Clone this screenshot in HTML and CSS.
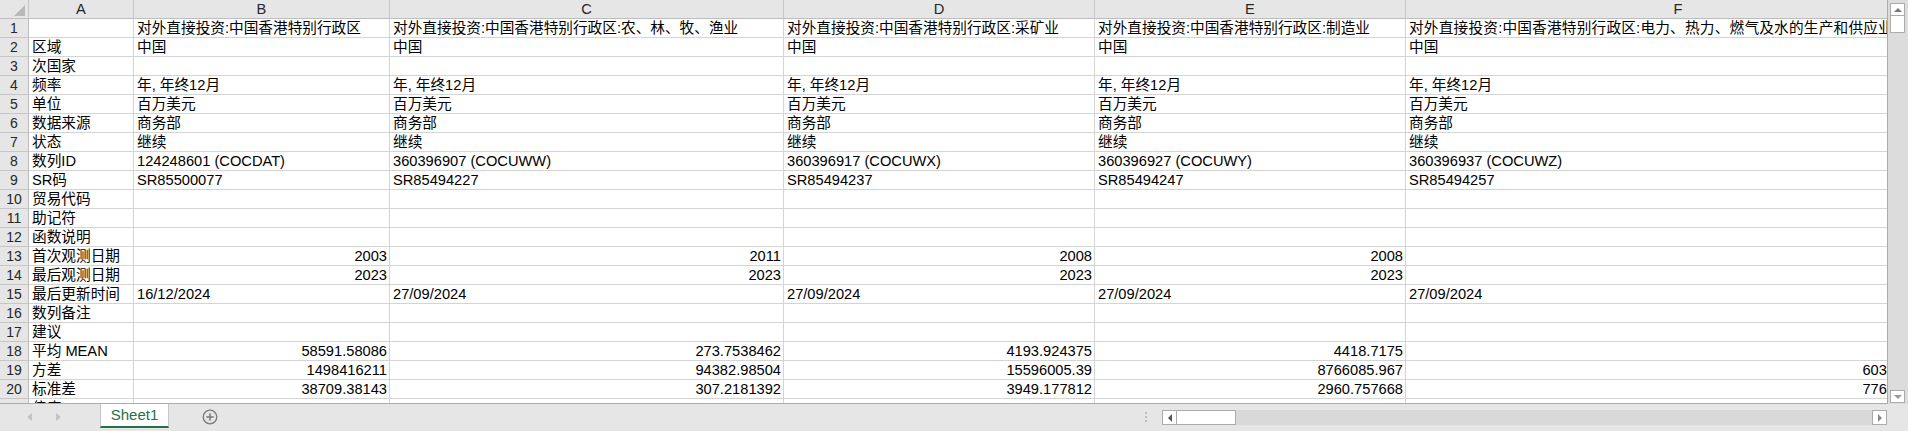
FILE: index.html
```html
<!DOCTYPE html>
<html lang="zh-CN">
<head>
  <meta charset="UTF-8">
  <title>Sheet1</title>
  <link rel="stylesheet" href="styles.css">
</head>
<body>
  <div class="app">
    <div class="main">
      <!-- Grid -->
      <div class="sheet">
        <div class="row head">
          <div class="corner"><span class="tri"></span></div>
          <div class="h">A</div><div class="h">B</div><div class="h">C</div><div class="h">D</div><div class="h">E</div><div class="h">F</div>
        </div>
        <div class="row">
          <div class="rh">1</div><div class="c"></div>
          <div class="c">对外直接投资:中国香港特别行政区</div>
          <div class="c">对外直接投资:中国香港特别行政区:农、林、牧、渔业</div>
          <div class="c">对外直接投资:中国香港特别行政区:采矿业</div>
          <div class="c">对外直接投资:中国香港特别行政区:制造业</div>
          <div class="c wide">对外直接投资:中国香港特别行政区:电力、热力、燃气及水的生产和供应业</div>
        </div>
        <div class="row">
          <div class="rh">2</div><div class="c">区域</div>
          <div class="c">中国</div><div class="c">中国</div><div class="c">中国</div><div class="c">中国</div><div class="c">中国</div>
        </div>
        <div class="row">
          <div class="rh">3</div><div class="c">次国家</div>
          <div class="c"></div><div class="c"></div><div class="c"></div><div class="c"></div><div class="c"></div>
        </div>
        <div class="row">
          <div class="rh">4</div><div class="c">频率</div>
          <div class="c">年, 年终12月</div><div class="c">年, 年终12月</div><div class="c">年, 年终12月</div><div class="c">年, 年终12月</div><div class="c">年, 年终12月</div>
        </div>
        <div class="row">
          <div class="rh">5</div><div class="c">单位</div>
          <div class="c">百万美元</div><div class="c">百万美元</div><div class="c">百万美元</div><div class="c">百万美元</div><div class="c">百万美元</div>
        </div>
        <div class="row">
          <div class="rh">6</div><div class="c">数据来源</div>
          <div class="c">商务部</div><div class="c">商务部</div><div class="c">商务部</div><div class="c">商务部</div><div class="c">商务部</div>
        </div>
        <div class="row">
          <div class="rh">7</div><div class="c">状态</div>
          <div class="c">继续</div><div class="c">继续</div><div class="c">继续</div><div class="c">继续</div><div class="c">继续</div>
        </div>
        <div class="row">
          <div class="rh">8</div><div class="c">数列ID</div>
          <div class="c">124248601 (COCDAT)</div><div class="c">360396907 (COCUWW)</div><div class="c">360396917 (COCUWX)</div><div class="c">360396927 (COCUWY)</div><div class="c">360396937 (COCUWZ)</div>
        </div>
        <div class="row">
          <div class="rh">9</div><div class="c">SR码</div>
          <div class="c">SR85500077</div><div class="c">SR85494227</div><div class="c">SR85494237</div><div class="c">SR85494247</div><div class="c">SR85494257</div>
        </div>
        <div class="row">
          <div class="rh">10</div><div class="c">贸易代码</div>
          <div class="c"></div><div class="c"></div><div class="c"></div><div class="c"></div><div class="c"></div>
        </div>
        <div class="row">
          <div class="rh">11</div><div class="c">助记符</div>
          <div class="c"></div><div class="c"></div><div class="c"></div><div class="c"></div><div class="c"></div>
        </div>
        <div class="row">
          <div class="rh">12</div><div class="c">函数说明</div>
          <div class="c"></div><div class="c"></div><div class="c"></div><div class="c"></div><div class="c"></div>
        </div>
        <div class="row">
          <div class="rh">13</div><div class="c">首次观测日期</div>
          <div class="c num">2003</div><div class="c num">2011</div><div class="c num">2008</div><div class="c num">2008</div><div class="c num">2004</div>
        </div>
        <div class="row">
          <div class="rh">14</div><div class="c">最后观测日期</div>
          <div class="c num">2023</div><div class="c num">2023</div><div class="c num">2023</div><div class="c num">2023</div><div class="c num">2023</div>
        </div>
        <div class="row">
          <div class="rh">15</div><div class="c">最后更新时间</div>
          <div class="c">16/12/2024</div><div class="c">27/09/2024</div><div class="c">27/09/2024</div><div class="c">27/09/2024</div><div class="c">27/09/2024</div>
        </div>
        <div class="row">
          <div class="rh">16</div><div class="c">数列备注</div>
          <div class="c"></div><div class="c"></div><div class="c"></div><div class="c"></div><div class="c"></div>
        </div>
        <div class="row">
          <div class="rh">17</div><div class="c">建议</div>
          <div class="c"></div><div class="c"></div><div class="c"></div><div class="c"></div><div class="c"></div>
        </div>
        <div class="row">
          <div class="rh">18</div><div class="c">平均 MEAN</div>
          <div class="c num">58591.58086</div><div class="c num">273.7538462</div><div class="c num">4193.924375</div><div class="c num">4418.7175</div><div class="c num">1442.65</div>
        </div>
        <div class="row">
          <div class="rh">19</div><div class="c">方差</div>
          <div class="c num">1498416211</div><div class="c num">94382.98504</div><div class="c num">15596005.39</div><div class="c num">8766085.967</div><div class="c num">60302742.51</div>
        </div>
        <div class="row">
          <div class="rh">20</div><div class="c">标准差</div>
          <div class="c num">38709.38143</div><div class="c num">307.2181392</div><div class="c num">3949.177812</div><div class="c num">2960.757668</div><div class="c num">7765.420351</div>
        </div>
        <div class="row">
          <div class="rh">21</div><div class="c">偏度</div>
          <div class="c"></div><div class="c"></div><div class="c"></div><div class="c"></div><div class="c"></div>
        </div>
      </div>

      <!-- Vertical scrollbar -->
      <div class="vscroll">
        <div class="sbtn"><span class="arr up"></span></div>
        <div class="vthumb"></div>
        <div class="fill"></div>
        <div class="sbtn"><span class="arr down"></span></div>
      </div>
    </div>

    <!-- Sheet tabs + horizontal scrollbar -->
    <div class="tabbar">
      <div class="nav">
        <span class="nav-arr left"></span>
        <span class="nav-arr right"></span>
      </div>
      <div class="tab">Sheet1</div>
      <svg class="add" width="16" height="16" viewBox="0 0 16 16">
        <circle cx="8" cy="8" r="6.8" fill="none" stroke="#7a7a7a" stroke-width="1.3"/>
        <path d="M8 4.3v7.4M4.3 8h7.4" stroke="#7a7a7a" stroke-width="1.5"/>
      </svg>
      <div class="fill"></div>
      <div class="split"><i></i><i></i><i></i></div>
      <div class="hscroll">
        <div class="sbtn"><span class="arr left"></span></div>
        <div class="hthumb"></div>
        <div class="fill"></div>
        <div class="sbtn"><span class="arr right"></span></div>
      </div>
    </div>
  </div>
</body>
</html>
```

FILE: styles.css
```css
/* Basic */
body {
    margin: 0;
    width: 1908px;
    height: 431px;
    overflow: hidden;
    background: #e6e6e6;
    font-family: "Liberation Sans", "Noto Sans CJK SC", sans-serif;
    font-size: 14.67px;
    color: #000;
}
.app {
    display: flex;
    flex-direction: column;
    height: 431px;
}
.main {
    display: flex;
    height: 404px;
}
.fill {
    flex: 1;
}

/* Grid */
.sheet {
    width: 1887px;
    height: 403px;
    overflow: hidden;
    background: #fff;
    border-right: 1px solid #ababab;
    border-bottom: 1px solid #ababab;
}
.row {
    display: grid;
    grid-template-columns: 29px 105px 256px 394px 311px 311px 545px;
    height: 19px;
}
.row > div {
    box-sizing: border-box;
    height: 19px;
    line-height: 18px;
    border-right: 1px solid #d4d4d4;
    border-bottom: 1px solid #d4d4d4;
    white-space: nowrap;
    overflow: hidden;
}
.c {
    padding: 0 2px 0 3px;
}
.c.num {
    text-align: right;
}
.c.wide {
    letter-spacing: 0.2px;
}
.head > div {
    background: #e6e6e6;
    border-right-color: #c6c6c6;
    border-bottom-color: #bdbdbd;
    text-align: center;
    color: #262626;
}
.row > .rh {
    background: #e6e6e6;
    border-right-color: #bdbdbd;
    border-bottom-color: #c6c6c6;
    text-align: center;
    color: #262626;
    font-size: 14px;
}
.corner {
    display: flex;
    justify-content: flex-end;
    align-items: flex-end;
    padding: 0 3px 2px 0;
}
.tri {
    width: 0;
    height: 0;
    border-left: 11px solid transparent;
    border-bottom: 11px solid #b9b9b9;
}

/* Scrollbars */
.vscroll {
    flex: 1;
    display: flex;
    flex-direction: column;
    padding: 3px 0 1px 2px;
    background: #dcdcdc;
}
.vscroll .sbtn {
    width: 15px;
    height: 13px;
}
.sbtn {
    box-sizing: border-box;
    display: flex;
    justify-content: center;
    align-items: center;
    background: #fff;
    border: 1px solid #ababab;
}
.vthumb {
    box-sizing: border-box;
    width: 15px;
    height: 17px;
    background: #fff;
    border: 1px solid #ababab;
    border-top: 0;
}
.arr {
    width: 0;
    height: 0;
}
.arr.up {
    border-left: 4px solid transparent;
    border-right: 4px solid transparent;
    border-bottom: 4px solid #777;
}
.arr.down {
    border-left: 4px solid transparent;
    border-right: 4px solid transparent;
    border-top: 4px solid #9a9a9a;
}
.arr.left {
    border-top: 4px solid transparent;
    border-bottom: 4px solid transparent;
    border-right: 4px solid #555;
}
.arr.right {
    border-top: 4px solid transparent;
    border-bottom: 4px solid transparent;
    border-left: 4px solid #8a8a8a;
}

/* Tab bar */
.tabbar {
    display: flex;
    align-items: flex-start;
    height: 27px;
}
.nav {
    box-sizing: border-box;
    width: 100px;
    display: flex;
    gap: 24px;
    padding: 9px 0 0 27px;
}
.nav-arr {
    width: 0;
    height: 0;
    border-top: 4px solid transparent;
    border-bottom: 4px solid transparent;
}
.nav-arr.left {
    border-right: 5px solid #c3c3c3;
}
.nav-arr.right {
    border-left: 5px solid #c3c3c3;
}
.tab {
    width: 67px;
    height: 22px;
    line-height: 22px;
    background: #fff;
    border-left: 1px solid #c6c6c6;
    border-right: 1px solid #c6c6c6;
    border-bottom: 2px solid #217346;
    color: #217346;
    text-align: center;
    font-size: 15px;
}
.add {
    margin: 5px 0 0 33px;
}
.split {
    display: flex;
    flex-direction: column;
    gap: 2px;
    margin: 8px 15px 0 0;
}
.split i {
    width: 2px;
    height: 2px;
    background: #bdbdbd;
}
.hscroll {
    display: flex;
    width: 725px;
    height: 15px;
    margin: 6px 21px 0 0;
    background: #d9d9d9;
}
.hscroll .sbtn {
    width: 15px;
    height: 15px;
}
.hthumb {
    box-sizing: border-box;
    width: 59px;
    height: 15px;
    background: #fff;
    border: 1px solid #ababab;
    border-left: 0;
}
```
